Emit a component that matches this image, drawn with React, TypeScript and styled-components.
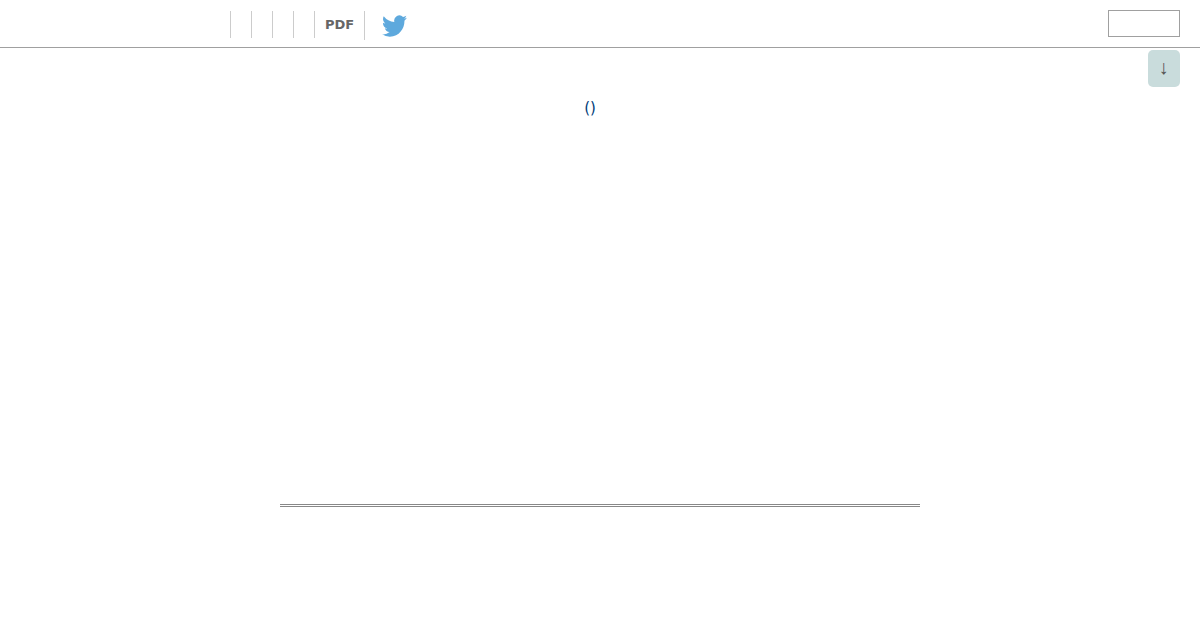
import React from "react";
import styled, { createGlobalStyle } from "styled-components";

const GlobalStyle = createGlobalStyle`
  html, body {
    margin: 0;
    padding: 0;
    background: #fff;
    font-family: "DejaVu Sans", sans-serif;
  }
`;

const Page = styled.div`
  width: 1200px;
  height: 630px;
  overflow: hidden;
`;

const Header = styled.header`
  display: flex;
  align-items: flex-start;
  justify-content: space-between;
  height: 47px;
  padding: 0 20px 0 230px;
  border-bottom: 1px solid #a0a0a0;
`;

const Menu = styled.ul`
  display: flex;
  align-items: flex-start;
  margin: 0;
  padding: 11px 0 0;
  list-style: none;
`;

const MenuItem = styled.li<{ $wide?: boolean; $tall?: boolean }>`
  box-sizing: border-box;
  width: ${(p) => (p.$wide ? "50px" : "21px")};
  height: ${(p) => (p.$tall ? "29px" : "27px")};
  padding-left: 10px;
  border-left: 1px solid #ccc;
  color: #666;
  font-size: 13px;
  font-weight: bold;
  line-height: 27px;
  white-space: nowrap;
`;

const TwitterLink = styled.a`
  display: block;
  margin: 4px 0 0 7px;
  height: 23px;
  line-height: 0;
`;

const SearchBox = styled.input`
  box-sizing: border-box;
  width: 72px;
  height: 27px;
  margin-top: 10px;
  padding: 0;
  border: 1px solid #a0a0a0;
  background: #fff;
`;

const Main = styled.main`
  display: flex;
  flex-direction: column;
  width: 1180px;
`;

const TopButton = styled.button`
  align-self: flex-end;
  width: 32px;
  height: 37px;
  margin-top: 2px;
  padding: 0 1px 3px 0;
  border: 0;
  border-radius: 5px;
  background: #c9dcdc;
  color: #555;
  font-family: "Liberation Sans", sans-serif;
  font-size: 20px;
  font-weight: normal;
`;

const Title = styled.a`
  margin-top: 11px;
  color: #003c78;
  font-size: 15px;
  line-height: 20px;
  text-align: center;
`;

const Rule = styled.hr`
  box-sizing: border-box;
  width: 640px;
  height: 3px;
  margin: 386px 0 0 280px;
  border: 0;
  border-top: 3px double #888;
`;

const App: React.FC = () => {
  return (
    <Page>
      <GlobalStyle />
      <Header>
        <Menu>
          <MenuItem />
          <MenuItem />
          <MenuItem />
          <MenuItem />
          <MenuItem $wide>PDF</MenuItem>
          <MenuItem $tall>
            <TwitterLink>
              <svg width="25" height="22" viewBox="0 0 24 20" preserveAspectRatio="none" fill="#5ea9dd">
                <path d="M23.95 2.57a9.83 9.83 0 0 1-2.83.78A4.94 4.94 0 0 0 23.34.62a9.9 9.9 0 0 1-3.13 1.19 4.92 4.92 0 0 0-8.38 4.48A13.98 13.98 0 0 1 1.67 1.15a4.93 4.93 0 0 0 1.52 6.57 4.9 4.9 0 0 1-2.23-.61v.06a4.92 4.92 0 0 0 3.95 4.83 5 5 0 0 1-2.21.08 4.94 4.94 0 0 0 4.6 3.42A9.87 9.87 0 0 1 0 17.54a13.94 13.94 0 0 0 7.55 2.21c9.05 0 14-7.5 14-13.98 0-.21 0-.42-.02-.63a9.94 9.94 0 0 0 2.42-2.57z" />
              </svg>
            </TwitterLink>
          </MenuItem>
        </Menu>
        <SearchBox />
      </Header>
      <Main>
        <TopButton>↓</TopButton>
        <Title>()</Title>
        <Rule />
      </Main>
    </Page>
  );
};

export default App;
